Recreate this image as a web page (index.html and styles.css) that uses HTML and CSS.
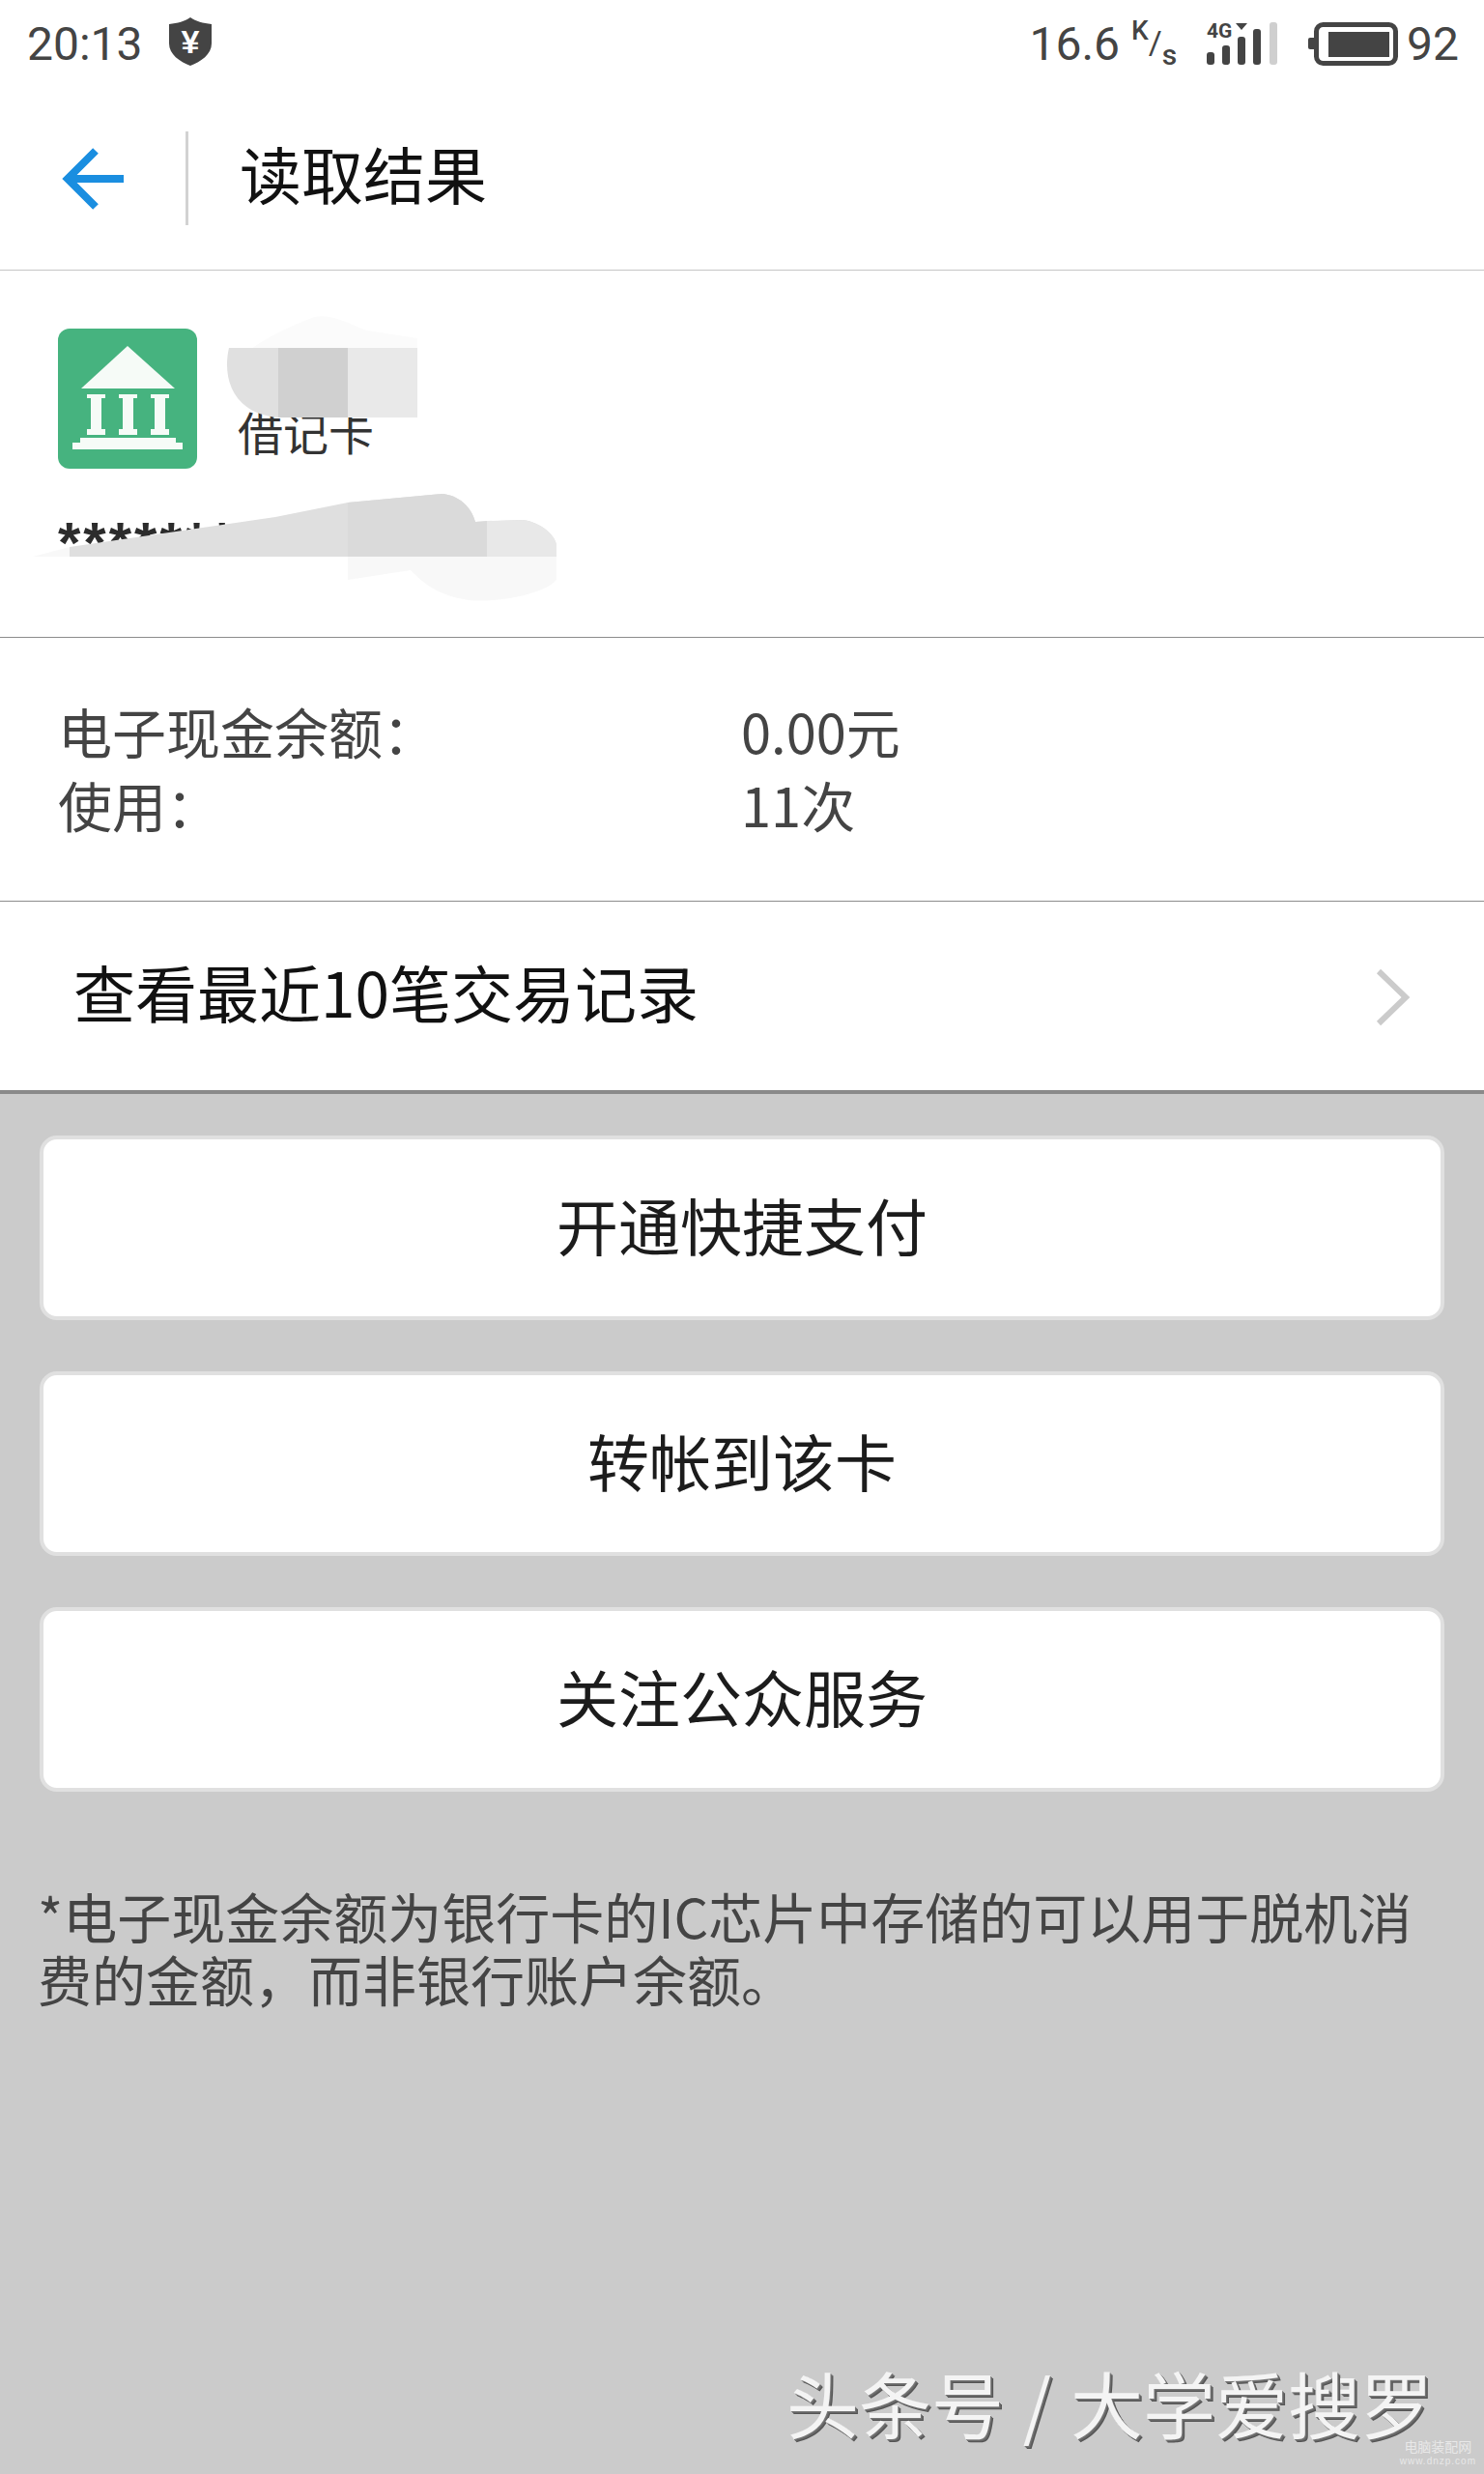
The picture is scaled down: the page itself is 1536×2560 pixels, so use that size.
FILE: index.html
```html
<!DOCTYPE html>
<html lang="zh-CN">
<head>
    <meta charset="UTF-8">
    <meta name="viewport" content="width=device-width, initial-scale=1.0">
    <title>读取结果</title>
    <link rel="stylesheet" href="styles.css">
</head>
<body>
    <div class="page">
        <div class="panel">
            <div class="statusbar">
                <div class="status-left">
                    <span>20:13</span>
                    <svg class="shield" viewBox="0 0 44 50">
                        <path d="M22 0 C28 4 35 6 44 7 V27 C44 38 33 46 22 50 C11 46 0 38 0 27 V7 C9 6 16 4 22 0 Z" fill="#444"/>
                        <text x="22" y="37" text-anchor="middle" class="shield-yen">¥</text>
                    </svg>
                </div>
                <div class="status-right">
                    <span>16.6</span>
                    <span class="speed-unit"><span class="unit-k">K</span><span class="unit-slash">/</span><span class="unit-s">s</span></span>
                    <svg class="signal" viewBox="0 0 73 44">
                        <text x="0" y="16" class="signal-4g">4G</text>
                        <path d="M30 1 H42 L36 8 Z" fill="#444"/>
                        <rect x="0" y="31" width="8" height="13" rx="3" fill="#444"/>
                        <rect x="16" y="24" width="8" height="20" rx="3" fill="#444"/>
                        <rect x="32" y="15" width="8" height="29" rx="3" fill="#444"/>
                        <rect x="48" y="7" width="8" height="37" rx="3" fill="#444"/>
                        <rect x="65" y="0" width="8" height="44" rx="3" fill="#cfcfcf"/>
                    </svg>
                    <svg class="battery" viewBox="0 0 93 45">
                        <rect x="0" y="16" width="8" height="12" rx="2" fill="#444"/>
                        <rect x="8.500" y="2.500" width="82" height="40" rx="7" fill="none" stroke="#444" stroke-width="5"/>
                        <rect x="21" y="10" width="63" height="26" fill="#444"/>
                    </svg>
                    <span>92</span>
                </div>
            </div>

            <div class="titlebar">
                <div class="back">
                    <svg class="back-arrow" viewBox="0 0 66 66">
                        <path d="M64 33 H6 M35 4 L6 33 L35 62" fill="none" stroke="#1a8ee0" stroke-width="8"/>
                    </svg>
                </div>
                <h1>读取结果</h1>
            </div>

            <div class="card-info">
                <div class="card-head">
                    <svg class="bank-icon" viewBox="0 0 144 145">
                        <rect width="144" height="145" rx="12" fill="#46b37f"/>
                        <g fill="#f6fbf7">
                            <path d="M72 18 L121 62 H24 Z"/>
                            <path d="M30 68 H49 V72 H45 V104 H49 V110 H30 V104 H34 V72 H30 Z"/>
                            <path d="M63 68 H82 V72 H78 V104 H82 V110 H63 V104 H67 V72 H63 Z"/>
                            <path d="M96 68 H115 V72 H111 V104 H115 V110 H96 V104 H100 V72 H96 Z"/>
                            <path d="M23 113 H122 V118 H129 V125 H15 V118 H23 Z"/>
                        </g>
                    </svg>
                    <div class="card-type">借记卡</div>
                </div>
                <div class="card-number">****************</div>
                <svg class="mosaic" viewBox="0 0 620 380">
                    <path d="M237 110 C245 80 300 58 325 48 C345 44 360 55 380 62 L432 70 V110 Z" fill="#fbfbfb"/>
                    <path d="M288 80 H237 C230 110 240 148 288 152 Z" fill="#e0e0e0"/>
                    <rect x="288" y="80" width="72" height="72" fill="#d0d0d0"/>
                    <rect x="360" y="80" width="72" height="72" fill="#e9e9e9"/>
                    <path d="M34 296 L72 286 V296 Z" fill="#f8f8f8"/>
                    <path d="M360 296 H576 V320 C560 338 500 345 480 340 C450 335 435 320 425 310 L360 320 Z" fill="#f8f8f8"/>
                    <path d="M72 296 V286 L285 255 L360 240 L457 231 C475 232 488 245 492 260 L541 258 C560 260 576 275 576 285 V296 Z" fill="#dfdfdf"/>
                    <path d="M360 240 L457 231 C475 232 488 245 492 260 L504 259 V296 H360 Z" fill="#dadada"/>
                    <path d="M504 259 L541 258 C560 260 576 275 576 285 V296 H504 Z" fill="#e8e8e8"/>
                </svg>
            </div>

            <div class="balance">
                <div class="balance-row">
                    <span class="balance-label">电子现金余额：</span>
                    <span>0.00元</span>
                </div>
                <div class="balance-row">
                    <span class="balance-label">使用：</span>
                    <span>11次</span>
                </div>
            </div>

            <div class="records">
                <span class="records-text">查看最近10笔交易记录</span>
                <svg class="chevron" viewBox="0 0 36 60">
                    <path d="M3 3 L31 30 L3 57" fill="none" stroke="#cbcbcb" stroke-width="6"/>
                </svg>
            </div>
        </div>

        <div class="actions">
            <button>开通快捷支付</button>
            <button>转帐到该卡</button>
            <button>关注公众服务</button>
        </div>

        <p class="note">*电子现金余额为银行卡的IC芯片中存储的可以用于脱机消费的金额，而非银行账户余额。</p>

        <div class="watermark">头条号 / 大学爱搜罗</div>
        <div class="site-mark">
            <div class="site-name">电脑装配网</div>
            <div class="site-url">www.dnzp.com</div>
        </div>
    </div>
</body>
</html>
```

FILE: styles.css
```css
body {
    margin: 0;
    background-color: #cbcbcb;
    font-family: "Noto Sans CJK SC", Roboto, sans-serif;
    color: #444;
}

.page {
    position: relative;
    height: 2560px;
    overflow: hidden;
    background-color: #cbcbcb;
}

.panel {
    background-color: white;
}

.statusbar {
    height: 90px;
    display: flex;
    justify-content: space-between;
    align-items: center;
    padding: 0 26px 0 28px;
    font-family: Roboto, sans-serif;
    font-size: 48px;
    color: #444;
}

.status-left,
.status-right {
    display: flex;
    align-items: center;
}

.shield {
    width: 44px;
    height: 50px;
    margin: -4px 0 0 27px;
}

.shield-yen {
    font-family: "Liberation Sans", sans-serif;
    font-size: 34px;
    font-weight: bold;
    fill: white;
}

.speed-unit {
    display: flex;
    width: 52px;
    height: 48px;
    margin-left: 8px;
    font-size: 28px;
    font-weight: 500;
    line-height: 1;
}

.unit-k {
    margin: -3px 0 0 4px;
}

.unit-slash {
    margin-top: 6px;
    font-size: 34px;
    font-weight: 400;
}

.unit-s {
    margin-top: 21px;
    font-size: 30px;
}

.signal {
    width: 73px;
    height: 44px;
    margin-left: 30px;
    overflow: visible;
}

.signal-4g {
    font-family: Roboto, sans-serif;
    font-size: 21px;
    font-weight: bold;
    fill: #444;
}

.battery {
    width: 93px;
    height: 45px;
    margin-left: 32px;
    margin-right: 9px;
}

.titlebar {
    height: 189px;
    display: flex;
    align-items: center;
    border-bottom: 1px solid #c6c6c6;
}

.back {
    width: 195px;
    height: 97px;
    display: flex;
    align-items: center;
    padding-left: 64px;
    box-sizing: border-box;
    border-right: 3px solid #d2d2d2;
}

.back-arrow {
    width: 66px;
    height: 66px;
}

.titlebar h1 {
    margin: 0 0 14px 53px;
    font-size: 64px;
    font-weight: 400;
    color: #111;
}

.card-info {
    position: relative;
    height: 380px;
    box-sizing: border-box;
    padding: 60px 0 0 60px;
    border-bottom: 1px solid #8c8c8c;
}

.card-head {
    display: flex;
}

.bank-icon {
    width: 144px;
    height: 145px;
}

.card-type {
    margin: 71px 0 0 42px;
    font-size: 47px;
    line-height: 70px;
    color: #333;
}

.card-number {
    margin-top: 47px;
    font-family: "Liberation Sans", sans-serif;
    font-size: 60px;
    font-weight: bold;
    line-height: 60px;
    letter-spacing: 3px;
    color: #2c2c2c;
}

/* smudge somebody painted over the card name and number */
.mosaic {
    position: absolute;
    left: 0;
    top: 0;
    width: 620px;
    height: 380px;
}

.balance {
    height: 273px;
    box-sizing: border-box;
    padding: 58px 0 0 60px;
    border-bottom: 1px solid #8c8c8c;
    font-size: 56px;
    line-height: 76px;
    color: #444;
}

.balance-row {
    display: flex;
}

.balance-label {
    width: 707px;
}

.records {
    height: 199px;
    box-sizing: border-box;
    display: flex;
    justify-content: space-between;
    align-items: center;
    padding: 0 76px 0 76px;
    border-bottom: 4px solid #8a8a8a;
    font-size: 64px;
    color: #111;
}

.records-text {
    margin-bottom: 12px;
}

.chevron {
    width: 36px;
    height: 60px;
    margin-top: 2px;
}

.actions {
    display: flex;
    flex-direction: column;
    gap: 53px;
    padding: 43px 41px 0;
}

.actions button {
    height: 191px;
    padding: 0 0 9px;
    background-color: white;
    border: 4px solid #e0e0e0;
    border-radius: 18px;
    font-family: inherit;
    font-size: 64px;
    color: #1c1c1c;
}

.note {
    margin: 95px 39px 0;
    font-size: 56px;
    line-height: 65px;
    color: #444;
}

.watermark {
    position: absolute;
    left: 814px;
    top: 2450px;
    font-size: 75px;
    line-height: 72px;
    word-spacing: 3px;
    white-space: nowrap;
    color: #f4f4f4;
    text-shadow: 1px 1px 0 #777, 2px 2px 0 #666, 3px 3px 0 #555;
}

.site-mark {
    position: absolute;
    right: 8px;
    top: 2522px;
    text-align: center;
    color: #e8e8e8;
}

.site-name {
    font-size: 14px;
    line-height: 18px;
}

.site-url {
    font-family: "Liberation Sans", sans-serif;
    font-size: 10px;
    line-height: 14px;
    letter-spacing: 1px;
}
```
